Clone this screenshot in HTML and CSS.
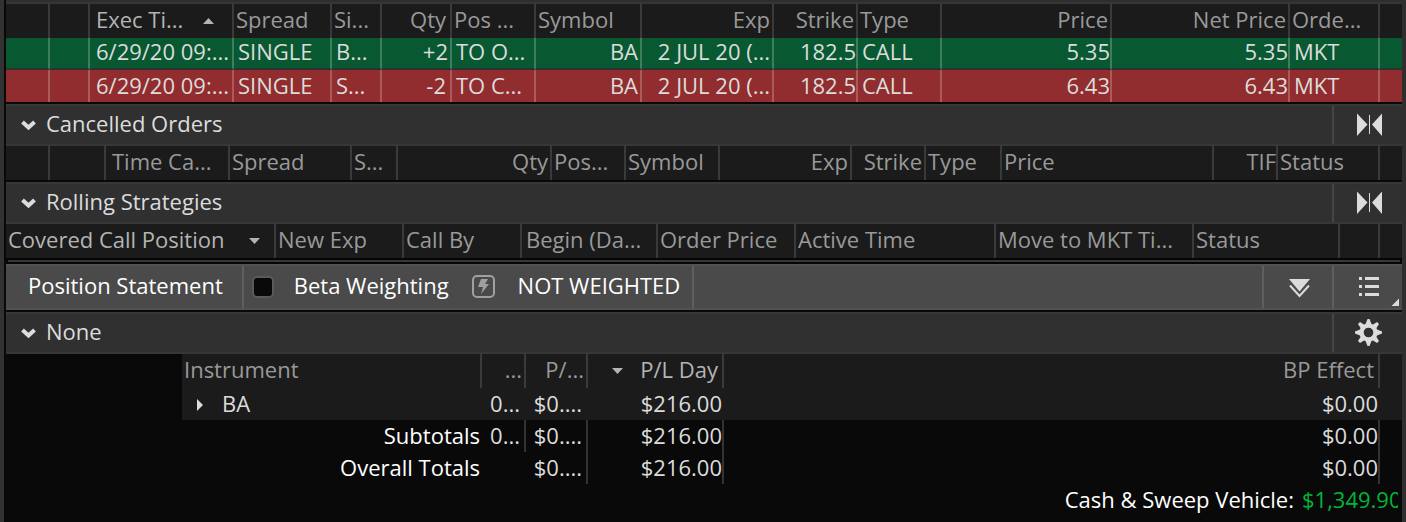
FILE: index.html
```html
<!DOCTYPE html>
<html lang="en">
<head>
<meta charset="utf-8">
<title>Account Statement</title>
<link rel="stylesheet" href="styles.css">
</head>
<body>
<main class="panel">
  <div class="panel-edge"></div>

  <table class="grid filled">
    <colgroup><col><col><col><col><col><col><col><col><col><col><col><col><col><col><col></colgroup>
    <thead>
      <tr>
        <th></th><th></th>
        <th class="wide sorted"><button class="sort" type="button">Exec Ti...<svg class="arrow" width="11" height="6" viewBox="0 0 11 6"><path d="M0 6 5.500 0 11 6z"/></svg></button></th>
        <th>Spread</th><th>Si...</th><th class="num gap">Qty</th><th>Pos ...</th><th>Symbol</th><th class="num">Exp</th><th class="num">Strike</th><th>Type</th><th class="num">Price</th><th class="num">Net Price</th><th>Orde...</th><th></th>
      </tr>
    </thead>
    <tbody>
      <tr class="buy"><td></td><td></td><td class="wide">6/29/20 09:...</td><td>SINGLE</td><td>B...</td><td class="num">+2</td><td>TO O...</td><td class="num">BA</td><td class="num">2 JUL 20 (...</td><td class="num tight">182.5</td><td>CALL</td><td class="num tight">5.35</td><td class="num tight">5.35</td><td>MKT</td><td></td></tr>
      <tr class="sell"><td></td><td></td><td class="wide">6/29/20 09:...</td><td>SINGLE</td><td>S...</td><td class="num gap">-2</td><td>TO C...</td><td class="num">BA</td><td class="num">2 JUL 20 (...</td><td class="num tight">182.5</td><td>CALL</td><td class="num tight">6.43</td><td class="num tight">6.43</td><td>MKT</td><td></td></tr>
    </tbody>
  </table>

  <header class="section">
    <button class="toggle" type="button"><svg width="15" height="11" viewBox="0 0 15 11"><path d="M1.500 2 7.500 7.500 13.500 2"/></svg>Cancelled Orders</button>
    <button class="tool" type="button" aria-label="Collapse columns"><svg width="68" height="38" viewBox="0 0 68 38"><path d="M23 7.500 33.500 18.500 23 30zM48 7.500 38 18.500 48 30zM35 9h1v19h-1z"/></svg></button>
  </header>
  <table class="grid cancelled">
    <colgroup><col><col><col><col><col><col><col><col><col><col><col><col><col><col><col></colgroup>
    <thead>
      <tr><th></th><th></th><th class="wide">Time Ca...</th><th>Spread</th><th>S...</th><th class="num">Qty</th><th>Pos...</th><th>Symbol</th><th class="num">Exp</th><th class="num">Strike</th><th>Type</th><th>Price</th><th class="num tight">TIF</th><th>Status</th><th></th></tr>
    </thead>
  </table>

  <header class="section">
    <button class="toggle" type="button"><svg width="15" height="11" viewBox="0 0 15 11"><path d="M1.500 2 7.500 7.500 13.500 2"/></svg>Rolling Strategies</button>
    <button class="tool" type="button" aria-label="Collapse columns"><svg width="68" height="38" viewBox="0 0 68 38"><path d="M23 7.500 33.500 18.500 23 30zM48 7.500 38 18.500 48 30zM35 9h1v19h-1z"/></svg></button>
  </header>
  <table class="grid rolling">
    <colgroup><col><col><col><col><col><col><col><col><col><col></colgroup>
    <thead>
      <tr>
        <th class="sorted"><button class="sort" type="button">Covered Call Position<svg class="arrow" width="11" height="6" viewBox="0 0 11 6"><path d="M0 0h11L5.500 6z"/></svg></button></th>
        <th>New Exp</th><th>Call By</th><th class="tab">Begin (Da...</th><th>Order Price</th><th>Active Time</th><th>Move to MKT Ti...</th><th>Status</th><th></th><th></th>
      </tr>
    </thead>
  </table>
  <div class="splitter"></div>

  <div class="toolbar">
    <h2 class="toolbar-title">Position Statement</h2>
    <div class="weighting">
      <input class="check" type="checkbox" id="beta">
      <label for="beta">Beta Weighting</label>
      <svg class="bolt" width="23" height="23" viewBox="0 0 23 23"><rect x="1" y="1" width="21" height="21" rx="4"/><path d="M9 4h7l-3 5h4l-8 10 2-7H6z"/></svg>
      <span>NOT WEIGHTED</span>
    </div>
    <button class="tool" type="button" aria-label="Expand all"><svg width="68" height="42" viewBox="0 0 68 42"><path d="M25 13h21L35.500 25.500z"/><path class="line" d="M26 19.500 35.500 30 45 19.500"/></svg></button>
    <button class="tool" type="button" aria-label="Menu"><svg width="68" height="42" viewBox="0 0 68 42"><path d="M25 11h3v3h-3zM31 11h14v3H31zM25 19h3v3h-3zM31 19h14v3H31zM25 27h3v3h-3zM31 27h14v3H31zM65 32.500V40h-7.500z"/></svg></button>
  </div>

  <header class="section">
    <button class="toggle" type="button"><svg width="15" height="11" viewBox="0 0 15 11"><path d="M1.500 2 7.500 7.500 13.500 2"/></svg>None</button>
    <button class="tool" type="button" aria-label="Settings"><svg width="68" height="38" viewBox="0 0 68 38"><g transform="translate(34.500 18.500)"><path fill-rule="evenodd" d="M-3-8.500-1-13.500H1L3-8.500 4.500-8 8.500-10.500 10.500-8.500 8-4.500 8.500-3 13.500-1V1L8.500 3 8 4.500 10.500 8.500 8.500 10.500 4.500 8 3 8.500 1 13.500H-1L-3 8.500-4.500 8-8.500 10.500-10.500 8.500-8 4.500-8.500 3-13.500 1V-1L-8.500-3-8-4.500-10.500-8.500-8.500-10.500-4.500-8zM4.800 0A4.800 4.800 0 1 0-4.800 0 4.800 4.800 0 1 0 4.800 0z"/></g></svg></button>
  </header>
  <table class="grid positions">
    <colgroup><col><col><col><col><col><col><col></colgroup>
    <thead>
      <tr>
        <td class="blank"></td><th>Instrument</th><th class="num">...</th><th class="num">P/...</th>
        <th class="sorted"><button class="sort lead" type="button"><svg class="arrow" width="11" height="6" viewBox="0 0 11 6"><path d="M0 0h11L5.500 6z"/></svg>P/L Day</button></th>
        <th class="num gap">BP Effect</th><th></th>
      </tr>
    </thead>
    <tbody>
      <tr class="position"><td class="blank"></td><td><button class="expand" type="button"><svg width="6" height="12" viewBox="0 0 6 12"><path d="M0 0 6 6 0 12z"/></svg>BA</button></td><td class="num">0...</td><td class="num">$0....</td><td class="num">$216.00</td><td class="num">$0.00</td><td></td></tr>
      <tr class="total"><td></td><th class="num">Subtotals</th><td class="num ruled">0...</td><td class="num ruled">$0....</td><td class="num ruled">$216.00</td><td class="num ruled">$0.00</td><td></td></tr>
      <tr class="total"><td></td><th class="num">Overall Totals</th><td></td><td class="num ruled">$0....</td><td class="num ruled">$216.00</td><td class="num ruled">$0.00</td><td></td></tr>
    </tbody>
  </table>
  <footer class="cash"><span>Cash &amp; Sweep Vehicle:</span><span class="amount">$1,349.90</span></footer>
</main>
</body>
</html>
```

FILE: styles.css
```css
* { box-sizing: border-box; }

body {
  margin: 0;
  background: #090909;
  color: #dcdcdc;
  font: 22px/26px "Open Sans", "Noto Sans", sans-serif;
  overflow: hidden;
}

button {
  border: 0;
  padding: 0;
  background: none;
  color: inherit;
  font: inherit;
  text-align: left;
}

svg { display: block; flex: none; fill: #dcdcdc; }

.panel {
  min-height: 100vh;
  border-left: 4px solid #323232;
  border-right: 4px solid #2f2f2f;
  padding-left: 2px;
}

.panel-edge {
  height: 4px;
  background: #2f2f2f;
  border-bottom: 2px solid #363636;
}

/* Tables */

.grid {
  width: 100%;
  table-layout: fixed;
  border-collapse: separate;
  border-spacing: 0;
  white-space: nowrap;
}

.grid th, .grid td {
  padding: 2px 2px 4px;
  font-weight: 400;
  text-align: left;
}

.grid thead th {
  padding: 2px 2px 6px;
  height: 34px;
  background: #1b1b1b;
  border-right: 2px solid #3a3a3a;
  color: #999;
}

.grid thead th:last-child { border-right: 0; }
.grid thead th.sorted { color: #b4b4b4; }
.grid .num { text-align: right; }
.grid .wide, .grid thead th.wide { padding-left: 6px; padding-right: 0; }
.grid thead th.tab { padding-left: 4px; }
.grid .gap, .grid thead th.gap { padding-right: 4px; }
.grid .tight, .grid thead th.tight { padding-right: 0; }

.sort {
  display: flex;
  width: 100%;
  align-items: center;
  justify-content: space-between;
  padding-right: 12px;
}

.sort .arrow { margin-top: 4px; fill: #b4b4b4; }
.wide .sort { padding-right: 18px; }
.sort.lead { padding: 0 2px 0 22px; }

.filled td {
  border-right: 2px solid rgba(255, 255, 255, 0.22);
  padding-left: 4px;
}

.filled td:last-child { border-right: 0; }
.filled .buy td { height: 32px; padding-top: 0; padding-bottom: 4px; background: #085932; border-bottom: 2px solid #303030; }
.filled .sell td { height: 32px; background: #912d2e; }

.filled col:nth-child(1) { width: 44px; }
.filled col:nth-child(2) { width: 40px; }
.filled col:nth-child(3) { width: 144px; }
.filled col:nth-child(4) { width: 98px; }
.filled col:nth-child(5) { width: 50px; }
.filled col:nth-child(6) { width: 70px; }
.filled col:nth-child(7) { width: 84px; }
.filled col:nth-child(8) { width: 106px; }
.filled col:nth-child(9) { width: 132px; }
.filled col:nth-child(10) { width: 84px; }
.filled col:nth-child(11) { width: 84px; }
.filled col:nth-child(13) { width: 178px; }
.filled col:nth-child(14) { width: 90px; }
.filled col:nth-child(15) { width: 22px; }

.cancelled col:nth-child(1) { width: 44px; }
.cancelled col:nth-child(2) { width: 56px; }
.cancelled col:nth-child(3) { width: 124px; }
.cancelled col:nth-child(4) { width: 122px; }
.cancelled col:nth-child(5) { width: 46px; }
.cancelled col:nth-child(6) { width: 154px; }
.cancelled col:nth-child(7) { width: 74px; }
.cancelled col:nth-child(8) { width: 94px; }
.cancelled col:nth-child(9) { width: 132px; }
.cancelled col:nth-child(10) { width: 74px; }
.cancelled col:nth-child(11) { width: 76px; }
.cancelled col:nth-child(13) { width: 64px; }
.cancelled col:nth-child(14) { width: 102px; }
.cancelled col:nth-child(15) { width: 22px; }

.rolling col:nth-child(1) { width: 270px; }
.rolling col:nth-child(2) { width: 128px; }
.rolling col:nth-child(3) { width: 118px; }
.rolling col:nth-child(4) { width: 136px; }
.rolling col:nth-child(5) { width: 138px; }
.rolling col:nth-child(6) { width: 200px; }
.rolling col:nth-child(7) { width: 198px; }
.rolling col:nth-child(9) { width: 40px; }
.rolling col:nth-child(10) { width: 22px; }

/* Section bars */

.section {
  display: flex;
  margin-top: 2px;
  border-top: 2px solid #373737;
  border-bottom: 2px solid #373737;
  background: #303030;
}

.toggle {
  display: flex;
  flex: 1;
  gap: 10px;
  padding: 4px 0 8px 15px;
}

.toggle svg {
  margin-top: 10px;
  fill: none;
  stroke: #dcdcdc;
  stroke-width: 4;
}

.tool { border-left: 2px solid #454545; }

.splitter {
  height: 6px;
  border: 2px solid #060606;
  background: #373737;
}

/* Position statement toolbar */

.toolbar {
  display: flex;
  border-top: 2px solid #525252;
  border-bottom: 2px solid #525252;
  background: #4a4a4a;
  color: #fff;
}

.toolbar .tool { border-left-color: #5f5f5f; }

.toolbar-title {
  margin: 0;
  padding: 6px 19px 10px 22px;
  font: inherit;
}

.weighting {
  display: flex;
  margin-right: auto;
  padding: 6px 12px 10px 8px;
  border-left: 2px solid #5f5f5f;
  border-right: 2px solid #5f5f5f;
}

.check {
  appearance: none;
  width: 22px;
  height: 22px;
  margin: 4px 20px 0 0;
  border: 2px solid #5a5a5a;
  border-radius: 5px;
  background: #090909;
}

.bolt { margin: 3px 23px 0 23px; fill: #a0a0a0; }
.bolt rect { fill: none; stroke: #a0a0a0; stroke-width: 2; }
.tool .line { fill: none; stroke: #dcdcdc; stroke-width: 2; }

/* Positions */

.positions col:nth-child(1) { width: 176px; }
.positions col:nth-child(2) { width: 300px; }
.positions col:nth-child(3) { width: 44px; }
.positions col:nth-child(4) { width: 62px; }
.positions col:nth-child(5) { width: 136px; }
.positions col:nth-child(7) { width: 22px; }

.positions tbody td, .positions tbody th { height: 32px; border-right: 2px solid transparent; }
.positions .position td { background: #1b1b1b; }
.positions .position td.blank { background: none; }
.positions tbody .num { padding-right: 0; }
.positions tbody td:nth-child(3), .positions tbody td:nth-child(4) { padding-right: 4px; }
.positions .total th { color: #fff; }
.positions tbody td.ruled { border-right-color: #333; }

.expand {
  display: flex;
  align-items: center;
  gap: 19px;
  padding-left: 13px;
}

.expand svg { margin-top: 3px; }

.cash {
  display: flex;
  justify-content: flex-end;
  gap: 8px;
  padding: 2px 4px 4px;
  color: #fff;
  white-space: nowrap;
}

.amount { width: 96px; overflow: hidden; color: #00b638; }
```
